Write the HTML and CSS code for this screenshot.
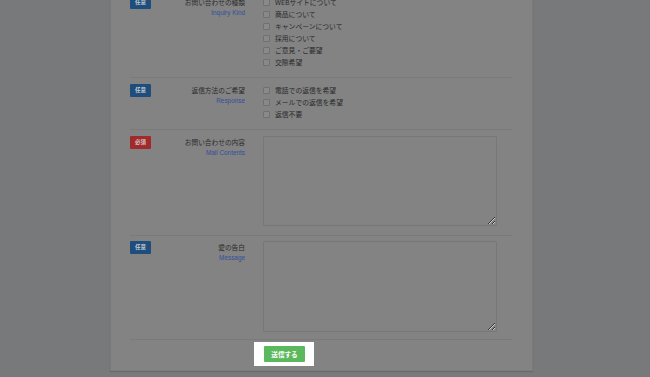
FILE: index.html
```html
<!DOCTYPE html>
<html lang="ja">
<head>
<meta charset="utf-8">
<title>お問い合わせ</title>
<link rel="stylesheet" href="styles.css">
</head>
<body>
<main class="page">
  <form class="card">
    <div class="row row-first">
      <span class="badge badge-any">任意</span>
      <div class="label"><span class="jp">お問い合わせの種類</span><span class="en">Inquiry Kind</span></div>
      <ul class="checks">
        <li><span class="box"></span>WEBサイトについて</li>
        <li><span class="box"></span>商品について</li>
        <li><span class="box"></span>キャンペーンについて</li>
        <li><span class="box"></span>採用について</li>
        <li><span class="box"></span>ご意見・ご要望</li>
        <li><span class="box"></span>交際希望</li>
      </ul>
    </div>
    <div class="row">
      <span class="badge badge-any">任意</span>
      <div class="label"><span class="jp">返信方法のご希望</span><span class="en">Response</span></div>
      <ul class="checks">
        <li><span class="box"></span>電話での返信を希望</li>
        <li><span class="box"></span>メールでの返信を希望</li>
        <li><span class="box"></span>返信不要</li>
      </ul>
    </div>
    <div class="row">
      <span class="badge badge-req">必須</span>
      <div class="label"><span class="jp">お問い合わせの内容</span><span class="en">Mail Contents</span></div>
      <textarea class="area area-1"></textarea>
    </div>
    <div class="row row-msg">
      <span class="badge badge-any">任意</span>
      <div class="label"><span class="jp">愛の告白</span><span class="en">Message</span></div>
      <textarea class="area area-2"></textarea>
    </div>
    <div class="submit-row">
      <div class="spot"><button type="button" class="btn">送信する</button></div>
    </div>
  </form>
</main>
</body>
</html>
```
FILE: styles.css
```css
html, body {
  margin: 0;
  padding: 0;
  background: #78797b;
  height: 100%;
  overflow: hidden;
}
body {
  font-family: "Noto Sans CJK JP", "Noto Sans", sans-serif;
  color: #2b2b2b;
}
.page {
  margin-top: -10px;
  padding-left: 110px;
}
.card {
  width: 423px;
  box-sizing: border-box;
  background: #838383;
  border-left: 1px solid #7a7a7a;
  border-right: 1px solid #7a7a7a;
  border-bottom: 1px solid #7c7c7c;
  box-shadow: 0 1px 1px rgba(0,0,0,0.12);
  padding: 0 20px 4px 19px;
}
.row {
  display: grid;
  grid-template-columns: 21px 94px 252px;
  align-items: start;
  padding: 6px 0 9px;
  border-bottom: 1px solid #7a7a7a;
}
.row-msg {
  padding-top: 5px;
  padding-bottom: 7px;
}
.badge {
  display: block;
  height: 13px;
  border-radius: 1px;
  font-size: 5.5px;
  font-weight: bold;
  line-height: 13px;
  text-align: center;
  color: #c6cbd1;
}
.badge-any { background: #1f4e7d; }
.badge-req { background: #a12b2b; color: #d4c6c6; }
.label {
  display: flex;
  flex-direction: column;
  align-items: flex-end;
}
.label .jp {
  font-size: 6.7px;
  line-height: 12px;
  color: #2a2a2a;
}
.label .en {
  font-family: "Liberation Sans", Arial, sans-serif;
  font-size: 6.4px;
  line-height: 10px;
  color: #32509a;
}
.checks {
  list-style: none;
  margin: 0 0 0 18px;
  padding: 0;
  width: 234px;
}
.checks li {
  display: flex;
  align-items: center;
  height: 12px;
  font-size: 6.8px;
  color: #2a2a2a;
}
.box {
  width: 5px;
  height: 5px;
  border: 1px solid #707070;
  background: #898989;
  border-radius: 1px;
  margin-right: 5px;
  flex: none;
}
.area {
  margin: 0 0 0 18px;
  box-sizing: border-box;
  width: 234px;
  background: #838383;
  border: 1px solid #777777;
  border-radius: 1px;
  padding: 0;
  display: block;
}
.area-1 { height: 90px; }
.area-2 { height: 91px; }
.submit-row {
  display: flex;
  padding: 2px 0 0 124px;
}
.spot {
  background: #ffffff;
  padding: 4px 9px 4px 10px;
}
.btn {
  display: block;
  width: 41px;
  height: 16px;
  border: 0;
  border-radius: 1px;
  background: #5cb85c;
  color: #ffffff;
  font-family: "Noto Sans CJK JP", sans-serif;
  font-size: 6.6px;
  font-weight: bold;
  padding: 0;
  line-height: 16px;
}
```
